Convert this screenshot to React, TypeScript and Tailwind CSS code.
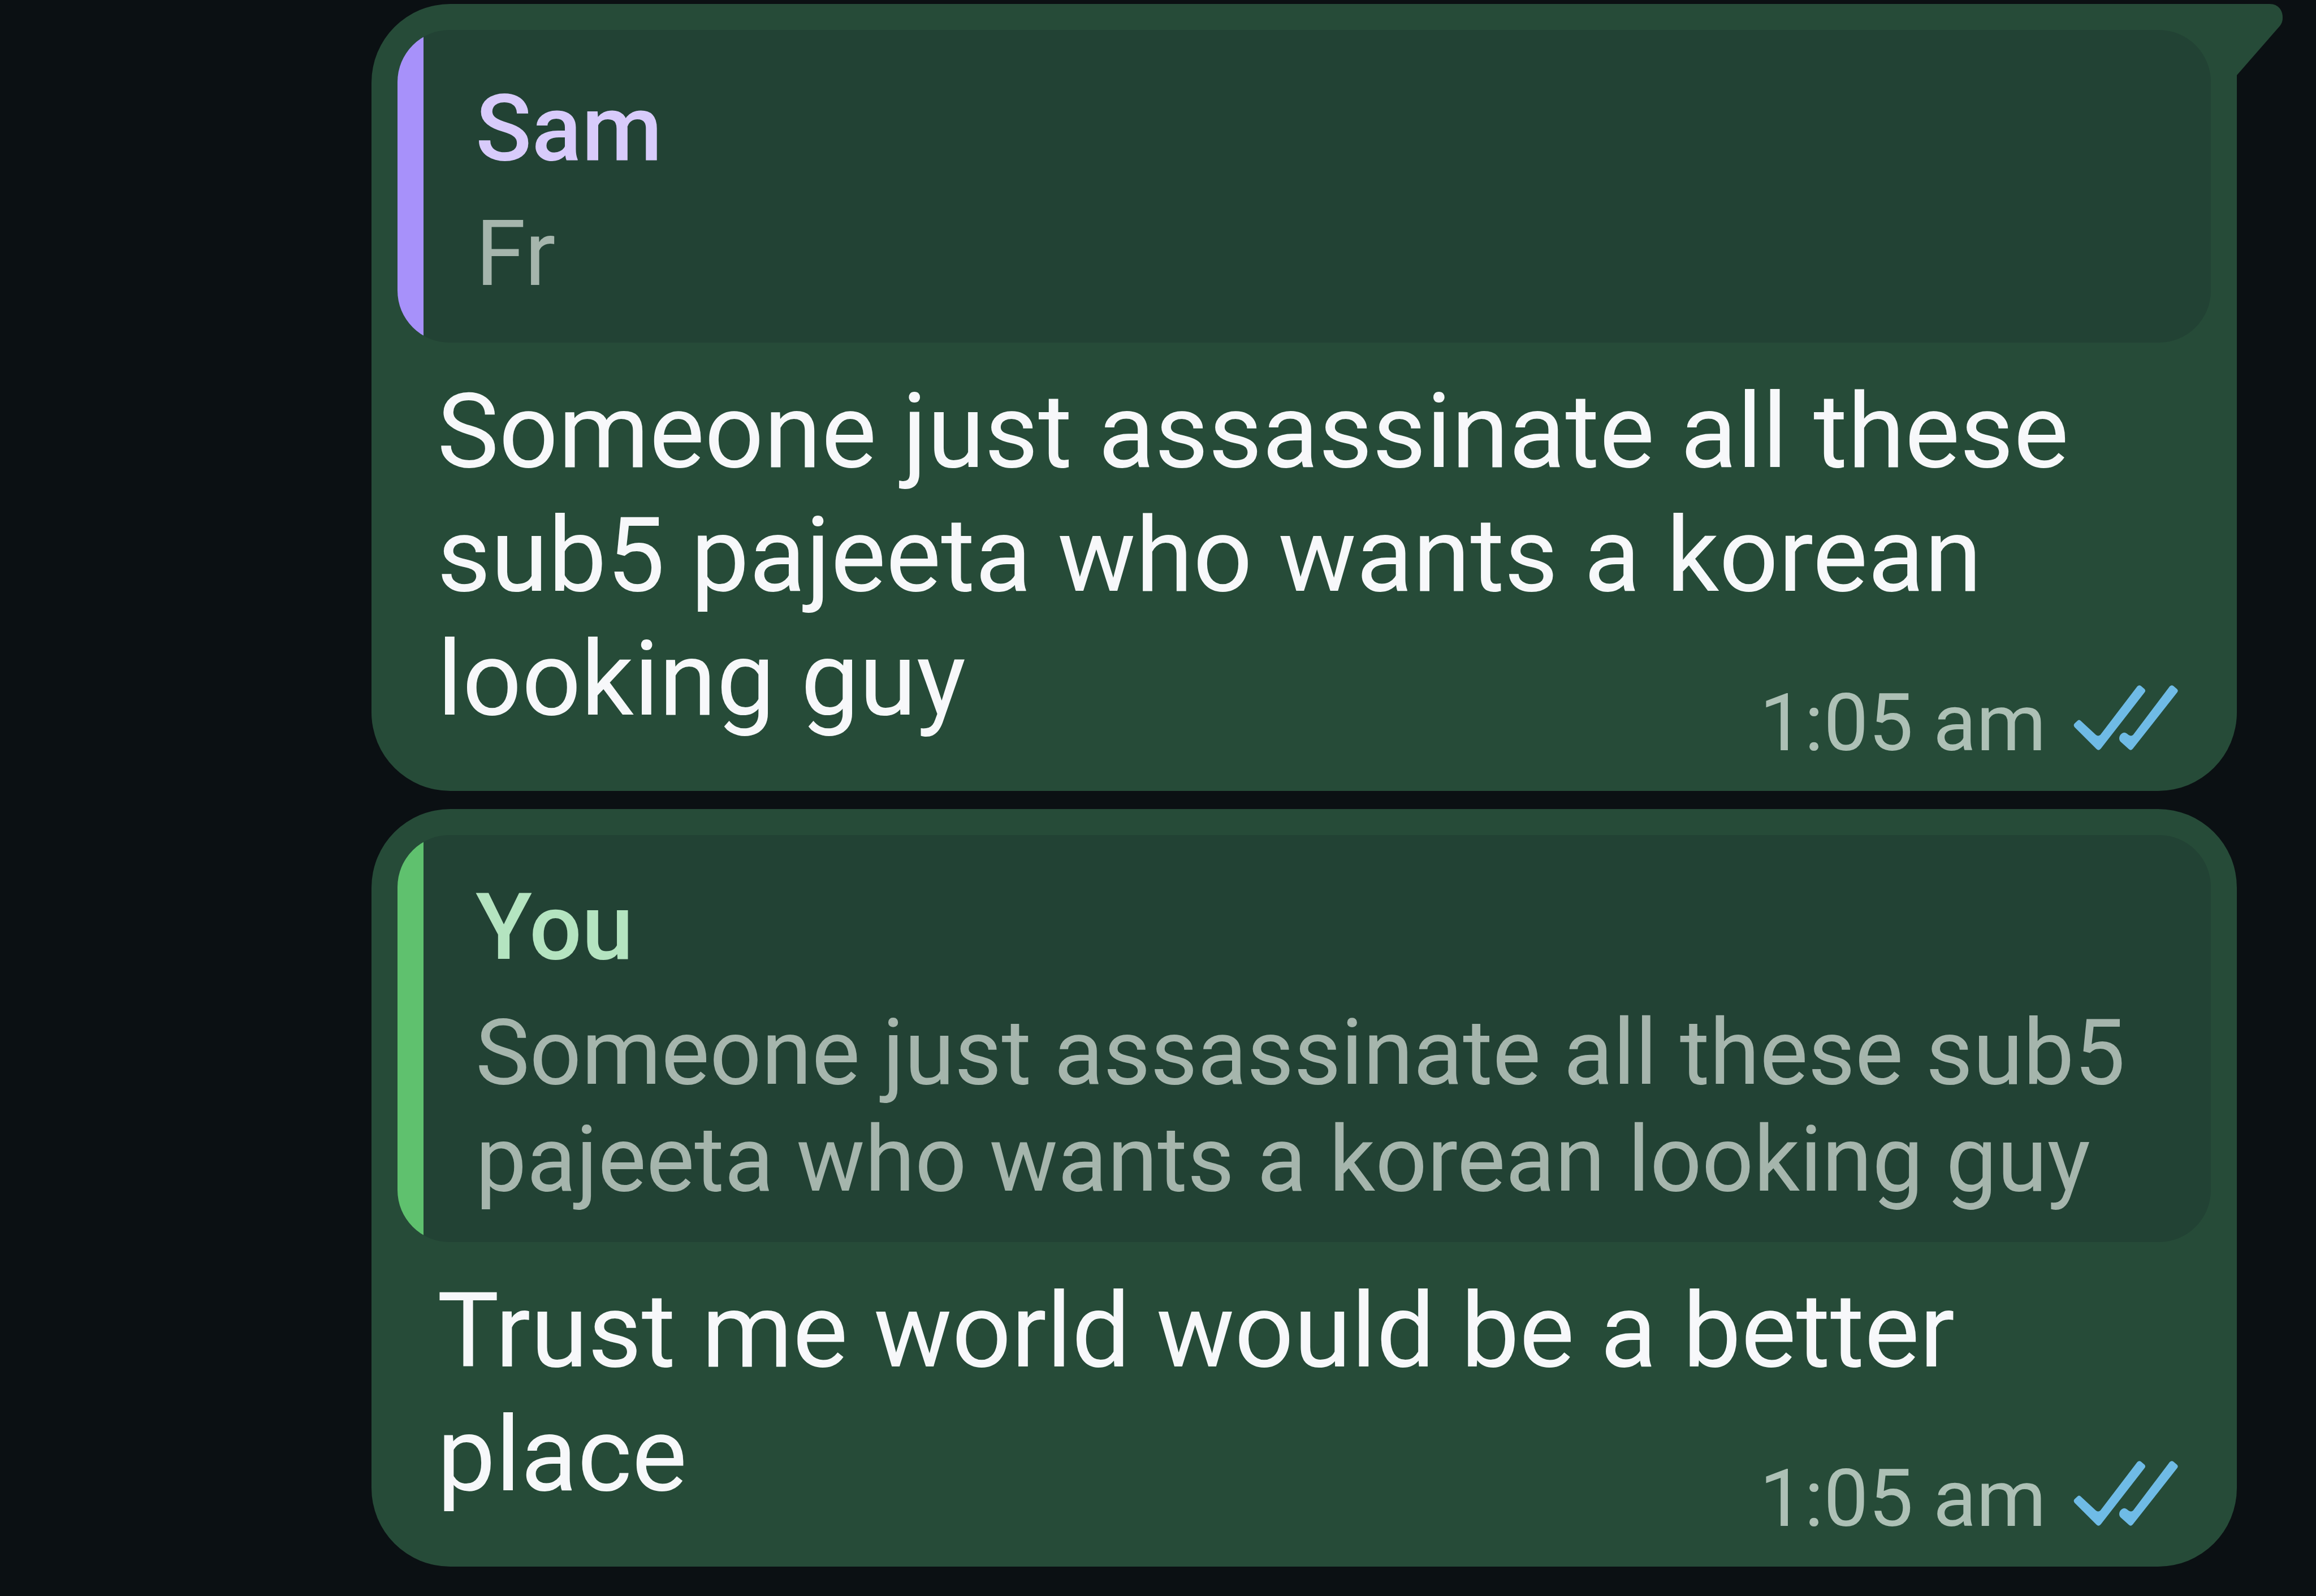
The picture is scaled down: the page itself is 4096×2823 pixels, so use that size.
import clsx from "clsx";

type Message = {
  id: number;
  quote: { author: string; text: string; tone: "purple" | "green" };
  text: string;
  time: string;
  hasTail: boolean;
};

const messages: Message[] = [
  {
    id: 1,
    quote: { author: "Sam", text: "Fr", tone: "purple" },
    text: "Someone just assassinate all these sub5 pajeeta who wants a korean looking guy",
    time: "1:05 am",
    hasTail: true,
  },
  {
    id: 2,
    quote: {
      author: "You",
      text: "Someone just assassinate all these sub5 pajeeta who wants a korean looking guy",
      tone: "green",
    },
    text: "Trust me world would be a better place",
    time: "1:05 am",
    hasTail: false,
  },
];

const ReadTicks = () => (
  <svg
    viewBox="0 0 576 359"
    className="h-[115px] w-[185px] shrink-0 fill-[#6fbbe6]"
    role="img"
    aria-label="Read"
  >
    <path d="M38 195L124 275Q136 284 148 274L352 6Q362 -4 372 4L392 21Q400 30 392 40L151 350Q139 364 127 353L5 231Q-3 220 6 211L22 196Q30 188 38 195Z" />
    <path d="M258 275L266 267Q280 256 294 267L304 275Q318 284 329 274L531 6Q541 -4 551 4L571 21Q580 30 572 40L328 350Q317 364 305 353L258 311Q246 294 258 275Z" />
  </svg>
);

const BubbleTail = () => (
  <svg
    viewBox="0 0 82 126"
    className="absolute top-0 left-full h-[126px] w-[82px] fill-[#264b38]"
    aria-hidden="true"
  >
    <path d="M0 0H58C74 0 81 12 81 24C81 31 79 35 76 39L0 126Z" />
  </svg>
);

const Quote = ({ quote }: { quote: Message["quote"] }) => (
  <blockquote className="flex min-h-[553px] overflow-hidden rounded-[92px] bg-[#224234]">
    <div
      className={clsx(
        "w-[46px] shrink-0",
        quote.tone === "purple" ? "bg-[#a791fa]" : "bg-[#5fc16e]",
      )}
    />
    <div className="flex-1 self-center pt-[66px] pr-[90px] pb-[51px] pl-[92px]">
      <p
        className={clsx(
          "text-[164px] leading-[195px] font-medium",
          quote.tone === "purple" ? "text-[#d8cbfb]" : "text-[#b4e4c0]",
        )}
      >
        {quote.author}
      </p>
      <p className="mt-[30px] text-[161px] leading-[189px] text-[#a5b5ac]">
        {quote.text}
      </p>
    </div>
  </blockquote>
);

const Bubble = ({ message }: { message: Message }) => (
  <li
    className={clsx(
      "relative rounded-[139px] bg-[#264b38] px-[46px] pt-[46px] pb-[38px]",
      message.hasTail && "rounded-tr-none",
    )}
  >
    {message.hasTail && <BubbleTail />}
    <Quote quote={message.quote} />
    {/* The time floats in beside the last line of text */}
    <div className="mt-12 flow-root pr-[58px] pl-[70px] text-[184px] leading-[219px] text-[#f7f8fa]">
      {message.text}
      <div className="float-right mt-[104px] flex items-baseline gap-[48px]">
        <time className="text-[141px] leading-[165px] text-[#adc0b5]">
          {message.time}
        </time>
        <ReadTicks />
      </div>
    </div>
  </li>
);

const App = () => {
  return (
    <main className="min-h-screen bg-[#0b1013] pt-[7px] pr-[140px] pl-[657px] font-['Roboto',sans-serif]">
      <ul className="flex flex-col gap-8">
        {messages.map((message) => (
          <Bubble key={message.id} message={message} />
        ))}
      </ul>
    </main>
  );
};

export default App;
